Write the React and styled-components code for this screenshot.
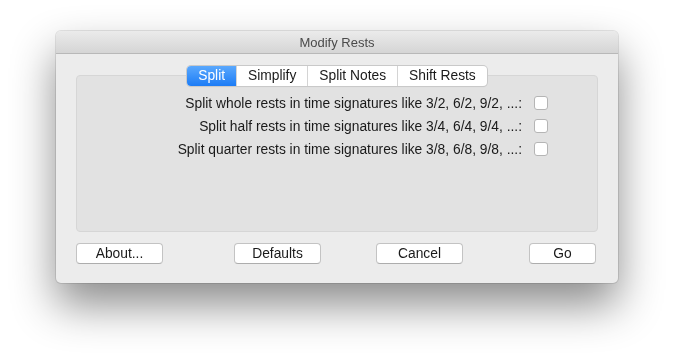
import React from "react";
import styled, { createGlobalStyle } from "styled-components";

/* Global
=========================================*/
const GlobalStyle = createGlobalStyle`
  html, body {
    margin: 0;
    background: #ffffff;
  }
  body {
    min-height: 100vh;
    font-family: "Liberation Sans", Arial, sans-serif;
    font-size: 13.8px;
    color: #1a1a1a;
  }
`;

const tabs = ["Split", "Simplify", "Split Notes", "Shift Rests"];

const options = [
  "Split whole rests in time signatures like 3/2, 6/2, 9/2, ...:",
  "Split half rests in time signatures like 3/4, 6/4, 9/4, ...:",
  "Split quarter rests in time signatures like 3/8, 6/8, 9/8, ...:",
];

const buttons = [
  { label: "About...", width: 87, gap: 0 },
  { label: "Defaults", width: 87, gap: 71 },
  { label: "Cancel", width: 87, gap: 55 },
  { label: "Go", width: 67, gap: 66 },
];

function App() {
  return (
    <>
      <GlobalStyle />
      <Stage>
        <Window>
          <TitleBar>Modify Rests</TitleBar>
          <Content>
            <TabBar>
              {tabs.map((t, i) => (
                <Tab key={t} $active={i === 0}>
                  {t}
                </Tab>
              ))}
            </TabBar>
            <Panel>
              {options.map((o) => (
                <OptionRow key={o}>
                  <span>{o}</span>
                  <Checkbox type="checkbox" />
                </OptionRow>
              ))}
            </Panel>
            <ButtonRow>
              {buttons.map((b) => (
                <Button key={b.label} $width={b.width} $gap={b.gap}>
                  {b.label}
                </Button>
              ))}
            </ButtonRow>
          </Content>
        </Window>
      </Stage>
    </>
  );
}

export default App;

/* Styled Components
=========================================*/
const Stage = styled.div`
  padding: 31px 0 80px 56px;
  filter: drop-shadow(0 22px 22px rgba(0, 0, 0, 0.45));
`;

const Window = styled.div`
  width: 562px;
  height: 252px;
  box-sizing: border-box;
  background: #ececec;
  border-radius: 5px;
  overflow: hidden;
  box-shadow: 0 0 0 1px rgba(0, 0, 0, 0.1);
`;

const TitleBar = styled.div`
  height: 22px;
  line-height: 23px;
  font-size: 13px;
  text-align: center;
  color: #4a4a4a;
  background: linear-gradient(#ebebeb, #d5d5d5);
  border-bottom: 1px solid #b8b8b8;
`;

const Content = styled.div`
  padding: 12px 20px 0 20px;
  display: flex;
  flex-direction: column;
`;

const TabBar = styled.div`
  align-self: center;
  display: flex;
  height: 20px;
  border-radius: 4px;
  background: #ffffff;
  box-shadow: 0 0 0 1px #c9c9c9, 0 1px 1px rgba(0, 0, 0, 0.1);
  position: relative;
  z-index: 1;
`;

const Tab = styled.div`
  padding: 0 11px;
  line-height: 20px;
  color: ${(p) => (p.$active ? "#ffffff" : "#1a1a1a")};
  background: ${(p) =>
    p.$active ? "linear-gradient(#5aa8fd, #1c7cf6)" : "transparent"};
  border-left: 1px solid ${(p) => (p.$active ? "transparent" : "#d4d4d4")};
  &:first-child {
    border-left: none;
    border-radius: 4px 0 0 4px;
  }
  &:last-child {
    border-radius: 0 4px 4px 0;
  }
`;

const Panel = styled.div`
  margin-top: -11px;
  height: 157px;
  box-sizing: border-box;
  background: #e2e2e2;
  border: 1px solid #d6d6d6;
  border-radius: 4px;
  padding: 19px 49px 0 0;
  display: flex;
  flex-direction: column;
  align-items: flex-end;
  gap: 7px;
`;

const OptionRow = styled.label`
  display: flex;
  align-items: center;
  gap: 12px;
  height: 16px;
  color: #1a1a1a;
`;

const Checkbox = styled.input`
  appearance: none;
  margin: 0;
  width: 14px;
  height: 14px;
  box-sizing: border-box;
  background: #ffffff;
  border: 1px solid #b5b5b5;
  border-radius: 3px;
`;

const ButtonRow = styled.div`
  display: flex;
  margin-top: 11px;
`;

const Button = styled.div`
  margin-left: ${(p) => p.$gap}px;
  width: ${(p) => p.$width}px;
  height: 21px;
  box-sizing: border-box;
  line-height: 20px;
  text-align: center;
  background: #ffffff;
  border: 1px solid #c3c3c3;
  border-bottom-color: #adadad;
  border-radius: 4px;
  color: #1a1a1a;
`;
